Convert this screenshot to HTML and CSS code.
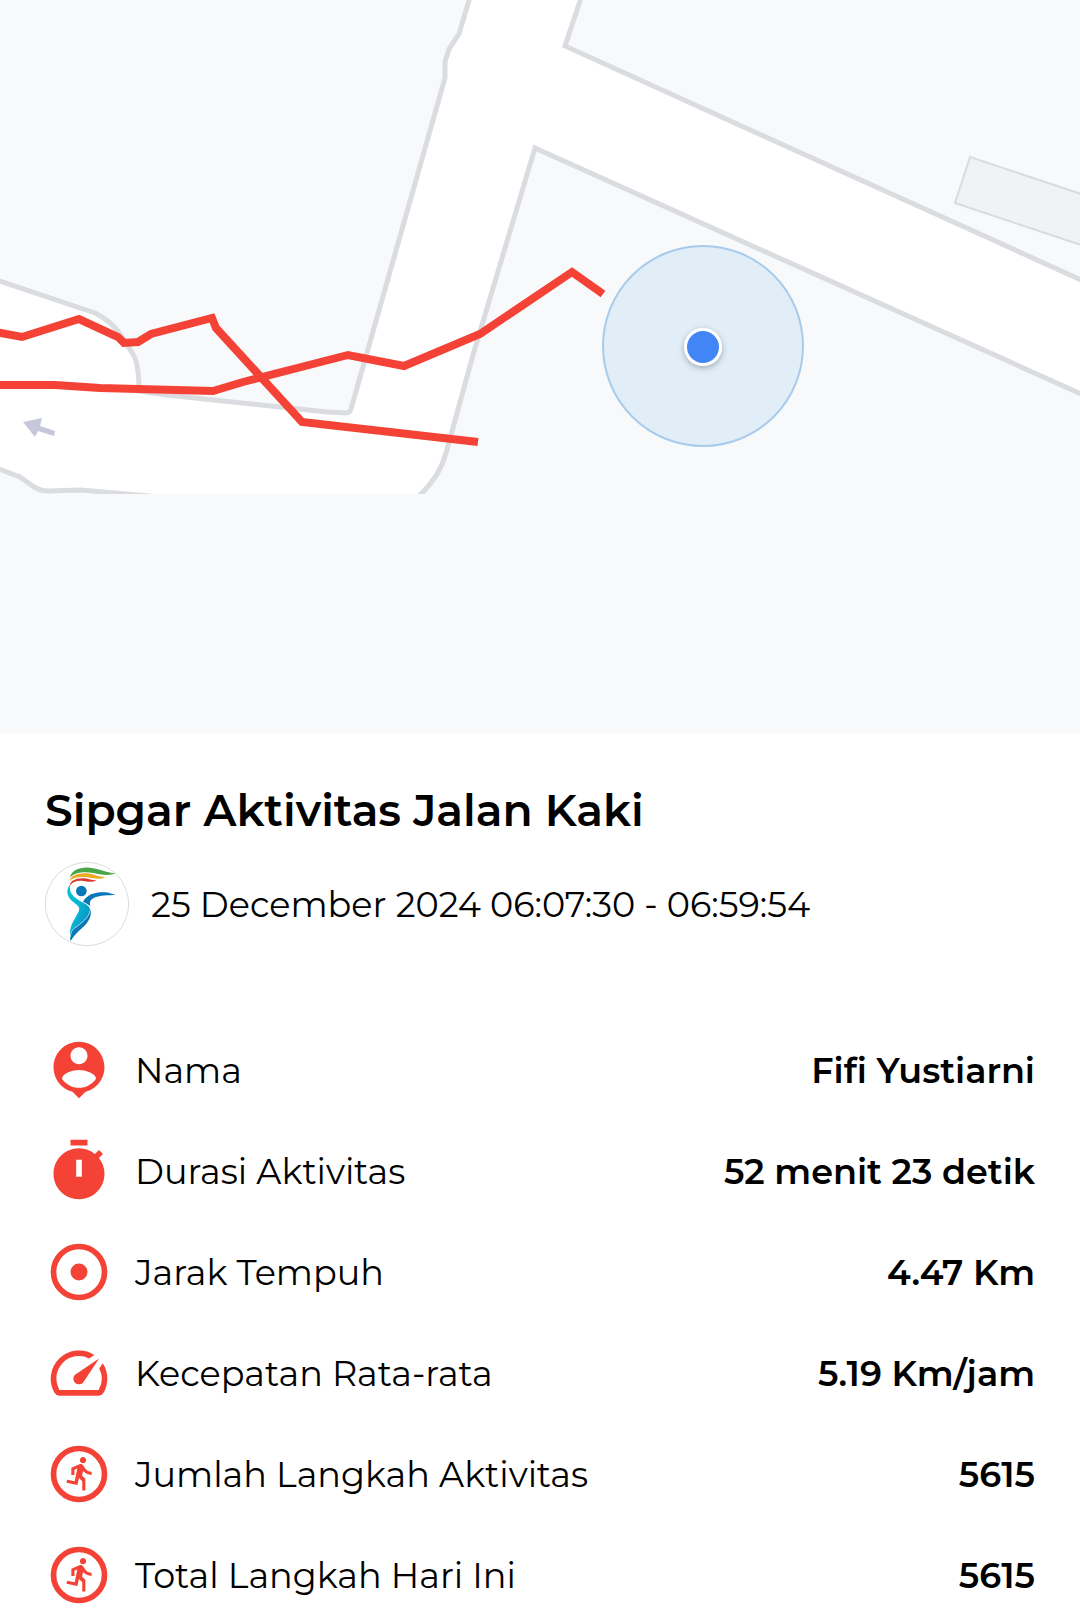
FILE: index.html
```html
<!DOCTYPE html>
<html lang="id">
<head>
    <meta charset="UTF-8">
    <meta name="viewport" content="width=device-width, initial-scale=1.0">
    <title>Sipgar Aktivitas Jalan Kaki</title>
    <link rel="stylesheet" href="styles.css">
</head>
<body>
    <!-- Peta rute -->
    <svg class="map" viewBox="0 0 1080 734" role="img" aria-label="Peta rute aktivitas">
        <defs>
            <clipPath id="tile"><rect x="-10" y="-10" width="1100" height="504"/></clipPath>
            <filter id="shadow" x="-50%" y="-50%" width="200%" height="200%">
                <feDropShadow dx="0" dy="2" stdDeviation="3" flood-color="#000" flood-opacity="0.3"/>
            </filter>
        </defs>

        <polygon class="building" points="970,157 955,203 1090,248 1090,197"/>

        <path class="road" clip-path="url(#tile)" d="M470 -3 L459 34 L449 49 L445 62 L445 78 L351 409 Q350 413 346 413 L327 412 L167 395 L139 391 Q139 366 134 356 Q128 346 122 337 Q113 322 95 313 L-6 279 V467 L20 477 L34 487 Q41 491 48 491 L80 490 L150 496 V510 H405 L420 495 Q440 476 446 453 L473 355 L535 148 L1090 398 V284 L565 46 L582 -5 Z"/>

        <polygon class="arrow" points="23,422 42,418 40,426 55,431 54,436 38,431 35,437"/>

        <polyline class="track" points="-5,332 22,337 79,319 118,337 124,343 138,342 151,334 212,318 216,328 302,422 478,442"/>
        <polyline class="track" points="-5,385 55,385 100,388 213,391 243,382 348,355 404,366 480,334 572,272 603,294"/>

        <circle class="accuracy" cx="703" cy="346" r="100"/>
        <circle cx="703" cy="347" r="19" fill="#fff" filter="url(#shadow)"/>
        <circle cx="703" cy="347" r="16" fill="#4285f4"/>
    </svg>

    <main class="info">
        <h1>Sipgar Aktivitas Jalan Kaki</h1>

        <div class="date">
            <svg class="logo" viewBox="30 37 252 252" aria-hidden="true">
                <defs>
                    <linearGradient id="body" x1="0" y1="0" x2="1" y2="1">
                        <stop offset="0" stop-color="#00c4d8"/>
                        <stop offset="0.45" stop-color="#08b4d2"/>
                        <stop offset="1" stop-color="#0878b8"/>
                    </linearGradient>
                </defs>
                <circle cx="156" cy="163" r="125" fill="#fff" stroke="#c8c8c8" stroke-width="2"/>
                <path fill="#48a548" d="M105 84 C108 62 134 52 163 54 C193 56 211 69 242 71 C219 80 196 74 176 70 C146 65 118 68 105 84Z"/>
                <path fill="#efaa25" d="M104 94 C107 76 132 68 158 71 C181 74 190 83 212 82 C193 92 175 86 157 83 C133 80 113 84 104 94Z"/>
                <path fill="#dc3830" d="M105 108 C105 93 124 84 148 86 C163 87 171 93 185 92 C171 99 157 96 145 94 C126 92 113 96 105 108Z"/>
                <path fill="url(#body)" d="M105 105 C91 121 96 143 116 158 C131 170 137 174 130 188 C121 207 104 225 105 253 L107 273 C126 243 162 219 167 190 C171 164 139 159 122 145 C107 133 103 121 105 105Z"/>
                <path fill="#0878b8" d="M143 158 C155 135 178 128 204 128 C223 128 230 133 242 136 C218 136 194 138 181 143 C168 148 162 155 166 169 C158 164 151 160 143 158Z"/>
                <path fill="#0878b8" d="M166 179 C169 191 168 204 155 221 C143 237 121 248 107 274 C105 257 105 247 116 238 C139 221 161 207 166 179Z"/>
                <path fill="none" stroke="#fff" stroke-width="2" d="M131 151 C147 159 166 166 166 180 C162 205 138 221 118 236 C110 242 107 249 106 262"/>
                <circle cx="139" cy="124" r="16" fill="#0878b8"/>
            </svg>
            <time datetime="2024-12-25T06:07:30">25 December 2024 06:07:30 - 06:59:54</time>
        </div>

        <dl class="stats">
            <div class="row">
                <dt>
                    <svg class="icon" viewBox="0 0 24 24" aria-hidden="true"><path d="M12 2c-4.97 0-9 4.03-9 9 0 4.17 2.84 7.67 6.69 8.69L12 22l2.31-2.31C18.16 18.67 21 15.17 21 11c0-4.97-4.03-9-9-9zm0 2c1.66 0 3 1.34 3 3s-1.34 3-3 3-3-1.34-3-3 1.34-3 3-3zm0 14.3c-2.5 0-4.71-1.28-6-3.22.03-1.99 4-3.08 6-3.08 1.99 0 5.97 1.09 6 3.08-1.29 1.94-3.5 3.22-6 3.22z"/></svg>
                    Nama
                </dt>
                <dd>Fifi Yustiarni</dd>
            </div>
            <div class="row">
                <dt>
                    <svg class="icon" viewBox="0 0 24 24" aria-hidden="true"><path fill-rule="evenodd" d="M15 1H9v2h6V1zm-4 13h2V8h-2v6zm8.03-6.61 1.42-1.42c-.43-.51-.9-.99-1.41-1.41l-1.42 1.42C16.07 4.74 14.12 4 12 4c-4.97 0-9 4.03-9 9s4.02 9 9 9 9-4.03 9-9c0-2.12-.74-4.07-1.97-5.61z"/></svg>
                    Durasi Aktivitas
                </dt>
                <dd>52 menit 23 detik</dd>
            </div>
            <div class="row">
                <dt>
                    <svg class="icon" viewBox="0 0 24 24" aria-hidden="true"><circle class="ring" cx="12" cy="12" r="9"/><circle cx="12" cy="12" r="3"/></svg>
                    Jarak Tempuh
                </dt>
                <dd>4.47 Km</dd>
            </div>
            <div class="row">
                <dt>
                    <svg class="icon" viewBox="0 0 24 24" aria-hidden="true"><path d="M20.38 8.57l-1.23 1.85a8 8 0 0 1-.22 7.58H5.07A8 8 0 0 1 15.58 6.85l1.85-1.23A10 10 0 0 0 3.35 19a2 2 0 0 0 1.72 1h13.85a2 2 0 0 0 1.74-1 10 10 0 0 0-.27-10.44zm-9.79 6.84a2 2 0 0 0 2.83 0l5.66-8.49-8.49 5.66a2 2 0 0 0 0 2.83z"/></svg>
                    Kecepatan Rata-rata
                </dt>
                <dd>5.19 Km/jam</dd>
            </div>
            <div class="row">
                <dt>
                    <svg class="icon" viewBox="0 0 24 24" aria-hidden="true">
                        <circle class="ring" cx="12" cy="12" r="9"/>
                        <path id="run" transform="translate(6 5.2) scale(.55)" d="M13.49 5.48c1.1 0 2-.9 2-2s-.9-2-2-2-2 .9-2 2 .9 2 2 2zm-3.6 13.9l1-4.4 2.1 2v6h2v-7.5l-2.1-2 .6-3c1.3 1.5 3.3 2.5 5.5 2.5v-2c-1.9 0-3.5-1-4.3-2.4l-1-1.6c-.4-.6-1-1-1.7-1-.3 0-.5.1-.8.1l-5.2 2.2v4.7h2v-3.4l1.8-.7-1.6 8.1-4.9-1-.4 2 7 1.4z"/>
                    </svg>
                    Jumlah Langkah Aktivitas
                </dt>
                <dd>5615</dd>
            </div>
            <div class="row">
                <dt>
                    <svg class="icon" viewBox="0 0 24 24" aria-hidden="true">
                        <circle class="ring" cx="12" cy="12" r="9"/>
                        <use href="#run"/>
                    </svg>
                    Total Langkah Hari Ini
                </dt>
                <dd>5615</dd>
            </div>
        </dl>
    </main>
</body>
</html>
```

FILE: styles.css
```css
body {
    font-family: Montserrat, Inter, sans-serif;
    font-variant-ligatures: none;
    background-color: #fff;
    color: #000;
    margin: 0;
}

/* Peta */
.map {
    display: block;
    width: 100%;
    height: auto;
    background: #f8f9fb;
}

.road {
    fill: #fff;
    stroke: #dadce0;
    stroke-width: 5;
}

.building {
    fill: #f1f2f4;
    stroke: #d9dbdd;
    stroke-width: 2;
}

.arrow {
    fill: #c5c8da;
}

.track {
    fill: none;
    stroke: #f44336;
    stroke-width: 8;
}

.accuracy {
    fill: #e1eef8;
    stroke: #a8cbeb;
    stroke-width: 2;
}

/* Informasi aktivitas */
.info {
    padding: 50px 45px 0;
}

h1 {
    margin: 0 0 26px;
    font-size: 44px;
    font-weight: 600;
    line-height: 52px;
}

.date {
    display: flex;
    align-items: center;
    gap: 22px;
    font-size: 35px;
    font-weight: 400;
}

.logo {
    width: 84px;
    height: 84px;
    flex-shrink: 0;
}

.stats {
    display: flex;
    flex-direction: column;
    gap: 33px;
    margin: 90px 0 0;
    font-size: 35px;
}

.row {
    display: flex;
    justify-content: space-between;
    align-items: center;
}

dt {
    display: flex;
    align-items: center;
    gap: 22px;
    font-weight: 400;
}

dd {
    margin: 0;
    font-weight: 600;
    text-align: right;
}

.icon {
    width: 68px;
    height: 68px;
    flex-shrink: 0;
    fill: #f44336;
}

.ring {
    fill: none;
    stroke: #f44336;
    stroke-width: 2;
}
```
